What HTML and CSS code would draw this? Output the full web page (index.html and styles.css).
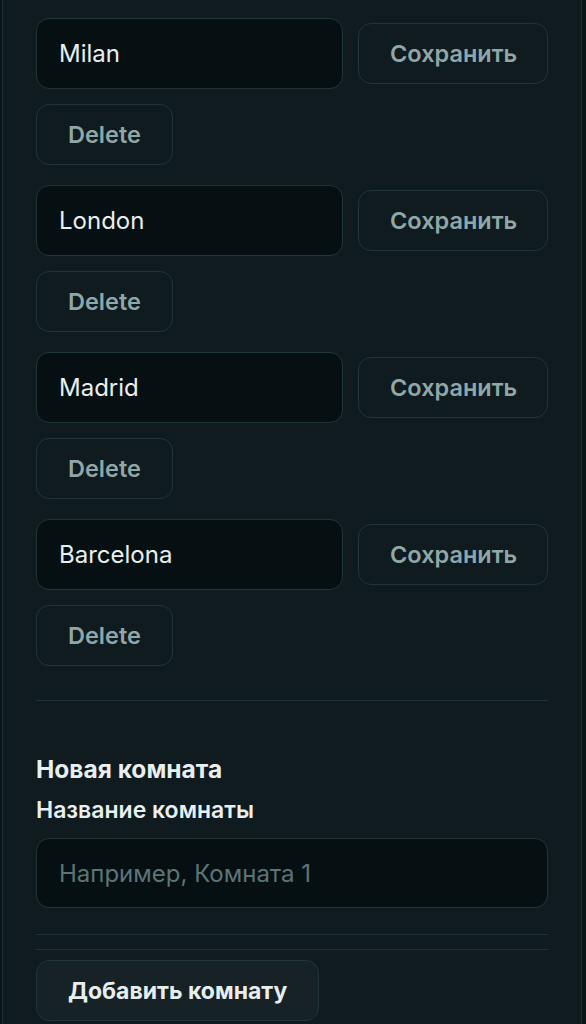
FILE: index.html
```html
<!DOCTYPE html>
<html lang="ru">
<head>
<meta charset="utf-8">
<title>Комнаты</title>
<link rel="stylesheet" href="styles.css">
</head>
<body>
<div class="card">
  <div class="rooms">
    <div class="room">
      <div class="room-row">
        <input class="field" type="text" value="Milan">
        <button class="btn">Сохранить</button>
      </div>
      <div><button class="btn">Delete</button></div>
    </div>
    <div class="room">
      <div class="room-row">
        <input class="field" type="text" value="London">
        <button class="btn">Сохранить</button>
      </div>
      <div><button class="btn">Delete</button></div>
    </div>
    <div class="room">
      <div class="room-row">
        <input class="field" type="text" value="Madrid">
        <button class="btn">Сохранить</button>
      </div>
      <div><button class="btn">Delete</button></div>
    </div>
    <div class="room">
      <div class="room-row">
        <input class="field" type="text" value="Barcelona">
        <button class="btn">Сохранить</button>
      </div>
      <div><button class="btn">Delete</button></div>
    </div>
  </div>
  <hr class="divider divider-top">
  <h3 class="title">Новая комната</h3>
  <label class="label" for="newroom">Название комнаты</label>
  <input class="field field-full" id="newroom" type="text" placeholder="Например, Комната 1">
  <hr class="divider divider-a">
  <hr class="divider divider-b">
  <button class="btn btn-primary">Добавить комнату</button>
</div>
</body>
</html>
```

FILE: styles.css
```css
* { box-sizing: border-box; }
html, body {
  margin: 0;
  padding: 0;
  background: #0b1416;
  font-family: Inter, "Noto Sans", "Liberation Sans", sans-serif;
  overflow: hidden;
}
.card {
  margin: 0 4px 0 2px;
  background: #0f1b1e;
  border: 1px solid #1e3034;
  border-top: 0;
  padding: 18px 33px 40px 33px;
}
.rooms {
  display: flex;
  flex-direction: column;
  gap: 20px;
}
.room {
  display: flex;
  flex-direction: column;
  gap: 15px;
}
.room-row {
  display: flex;
  align-items: center;
  gap: 15px;
}
.field {
  display: block;
  height: 71px;
  border: 1px solid #21343a;
  border-radius: 13px;
  background: #061013;
  color: #e9eff0;
  font-family: inherit;
  font-size: 24px;
  padding: 0 22px;
  outline: none;
}
.room-row .field { flex: 1; min-width: 0; }
.field-full { width: 100%; height: 70px; }
.field::placeholder { color: #5d7477; }
.btn {
  height: 61px;
  padding: 0 31px;
  border: 1px solid #21353a;
  border-radius: 13px;
  background: #0f1b1e;
  color: #8fa7a9;
  font-family: inherit;
  font-size: 23.5px;
  font-weight: 600;
}
.room-row .btn { width: 190px; }
.btn-primary {
  background: #162225;
  color: #e7eef0;
  font-weight: 700;
  font-size: 23px;
}
.divider {
  border: 0;
  height: 1px;
  background: #1f3135;
  margin: 0;
}
.divider-top { margin-top: 34px; }
.title {
  margin: 53px 0 0 0;
  font-size: 24.5px;
  font-weight: 700;
  color: #e9eff0;
  line-height: 30px;
}
.label {
  display: block;
  margin: 12px 0 14px 0;
  font-size: 23px;
  font-weight: 600;
  color: #e9eff0;
  line-height: 28px;
}
.divider-a { margin-top: 26px; }
.divider-b { margin-top: 14px; margin-bottom: 10px; }
```
